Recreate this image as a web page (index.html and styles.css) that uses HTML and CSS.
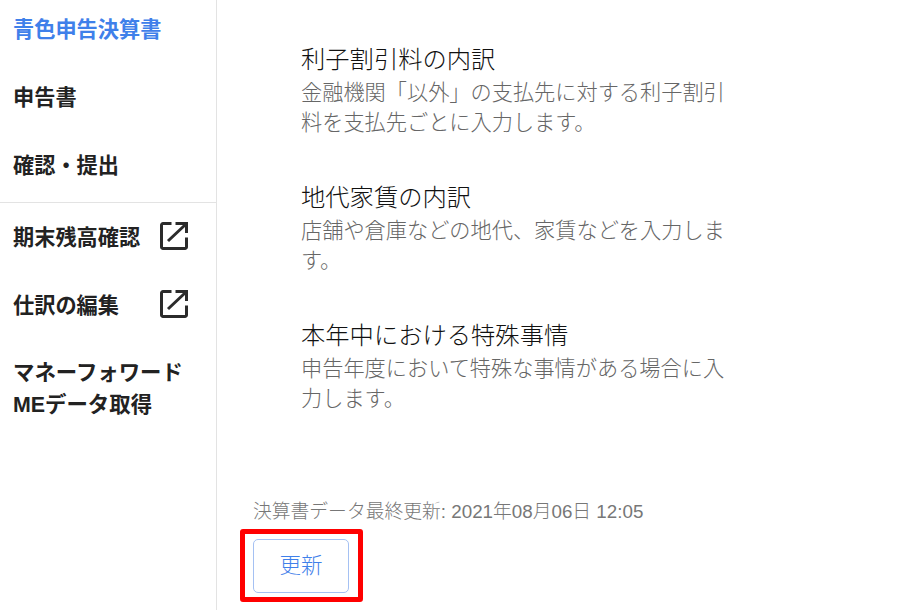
FILE: index.html
```html
<!DOCTYPE html>
<html lang="ja">
  <head>
    <meta charset="UTF-8" />
    <title>青色申告決算書</title>
    <link rel="stylesheet" href="styles.css">
  </head>
  <body>
    <div class="page">
      <nav class="sidebar">
        <div class="nav-group">
          <a class="nav-item active">青色申告決算書</a>
          <a class="nav-item">申告書</a>
          <a class="nav-item">確認・提出</a>
        </div>
        <div class="nav-group second">
          <a class="nav-item">期末残高確認
            <svg class="ext" viewBox="0 0 28 28" width="28" height="28"><path d="M11.500 1.500H3A1.500 1.500 0 0 0 1.500 3V25A1.500 1.500 0 0 0 3 26.500H25A1.500 1.500 0 0 0 26.500 25V15.500"/><path d="M8 19L25 3M15.500 1.500H26.500V11"/></svg>
          </a>
          <a class="nav-item">仕訳の編集
            <svg class="ext" viewBox="0 0 28 28" width="28" height="28"><path d="M11.500 1.500H3A1.500 1.500 0 0 0 1.500 3V25A1.500 1.500 0 0 0 3 26.500H25A1.500 1.500 0 0 0 26.500 25V15.500"/><path d="M8 19L25 3M15.500 1.500H26.500V11"/></svg>
          </a>
          <a class="nav-item multi">マネーフォワード<br>MEデータ取得</a>
        </div>
      </nav>
      <main class="content">
        <section class="entry">
          <h2>利子割引料の内訳</h2>
          <p>金融機関「以外」の支払先に対する利子割引料を支払先ごとに入力します。</p>
        </section>
        <section class="entry">
          <h2>地代家賃の内訳</h2>
          <p>店舗や倉庫などの地代、家賃などを入力します。</p>
        </section>
        <section class="entry">
          <h2>本年中における特殊事情</h2>
          <p>申告年度において特殊な事情がある場合に入力します。</p>
        </section>
        <div class="footer">
          <div class="updated">決算書データ最終更新: 2021年08月06日 12:05</div>
          <div class="button-wrap">
            <button class="update-btn">更新</button>
            <span class="highlight"></span>
          </div>
        </div>
      </main>
    </div>
  </body>
</html>
```

FILE: styles.css
```css
* {
  box-sizing: border-box;
}
html, body {
  height: 100%;
}
body {
  margin: 0;
  background-color: #fff;
  font-family: "Liberation Sans", "Noto Sans CJK JP", sans-serif;
  overflow: hidden;
}
.page {
  display: flex;
  height: 610px;
}
.sidebar {
  width: 217px;
  flex-shrink: 0;
  border-right: 1px solid #e3e3e3;
}
.nav-group {
  padding-top: 9px;
  padding-bottom: 2px;
}
.nav-group.second {
  border-top: 1px solid #e3e3e3;
  padding-top: 14px;
}
.nav-item {
  display: flex;
  align-items: center;
  justify-content: space-between;
  height: 36px;
  margin-bottom: 32px;
  padding: 0 28px 0 13px;
  font-size: 21.200px;
  font-weight: 700;
  color: #222;
}
.nav-item.active {
  color: #3f80ea;
}
.nav-item.multi {
  display: block;
  height: auto;
  line-height: 32px;
  margin-bottom: 0;
  padding-top: 4px;
  font-size: 21.400px;
}
.nav-group:first-child .nav-item:last-child {
  margin-bottom: 19px;
}
.ext {
  margin-top: 1px;
  fill: none;
  stroke: #2b2b2b;
  stroke-width: 3;
}
.content {
  flex: 1;
  padding: 42px 0 0 36px;
}
.entry {
  width: 428px;
  margin-left: 48px;
  margin-bottom: 42px;
}
.entry h2 {
  margin: 0;
  font-size: 24.300px;
  font-weight: 300;
  line-height: 36px;
  color: #111;
}
.entry p {
  margin: 0;
  font-size: 21.200px;
  font-weight: 300;
  line-height: 30px;
  color: #666;
}
.footer {
  margin-top: 85.500px;
}
.updated {
  font-size: 18.800px;
  font-weight: 300;
  line-height: 24px;
  color: #777;
}
.button-wrap {
  position: relative;
  width: 96px;
  margin-top: 15px;
}
.update-btn {
  display: block;
  width: 96px;
  height: 54px;
  padding: 0 0 5px;
  background-color: #fff;
  border: 1px solid #a5c1f3;
  border-radius: 5px;
  font-family: inherit;
  font-size: 21.500px;
  font-weight: 300;
  color: #3f80ea;
}
.highlight {
  position: absolute;
  left: -13px;
  top: -10px;
  width: 123px;
  height: 73px;
  border: 5px solid #f00;
  border-radius: 3px;
}
```
